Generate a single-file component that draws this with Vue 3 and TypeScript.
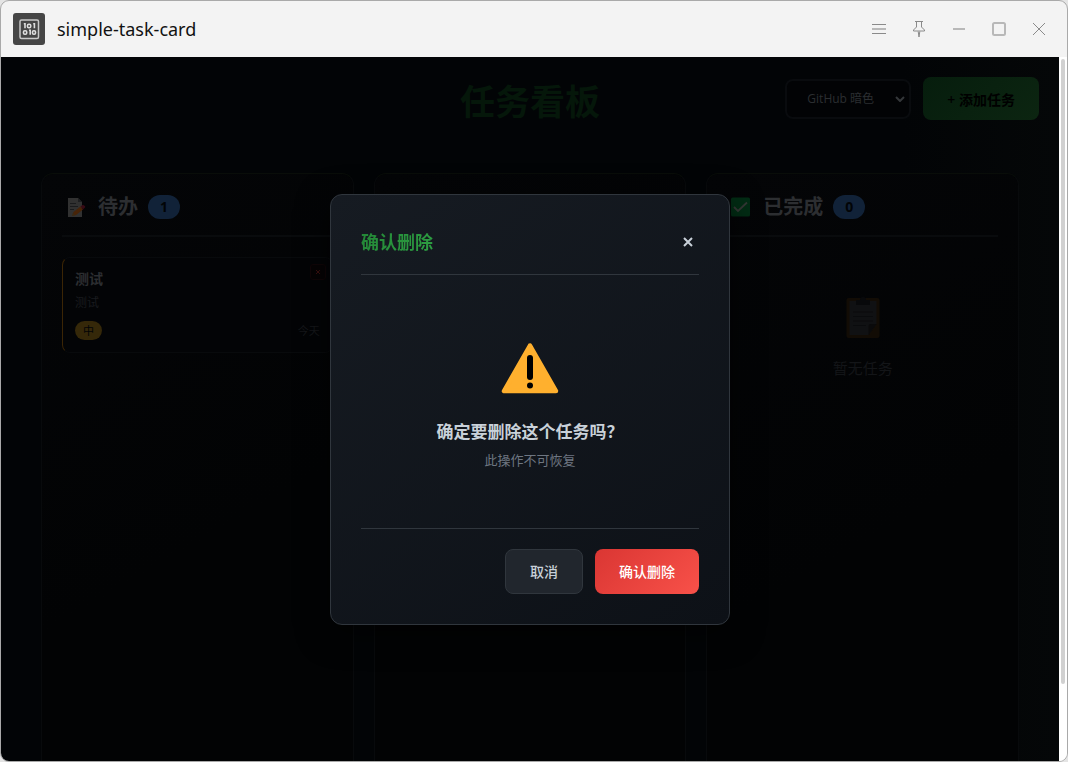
<script setup lang="ts">
import { ref } from 'vue'

interface Task {
  id: number
  title: string
  description: string
  priority: string
  due: string
}

const themes = ['GitHub 暗色']
const theme = ref(themes[0])
const todo = ref<Task[]>([
  { id: 1, title: '测试', description: '测试', priority: '中', due: '今天' },
])
const doneCount = ref(0)
</script>

<template>
  <div class="window">
    <header class="titlebar">
      <svg class="app-icon" viewBox="0 0 32 32" aria-hidden="true">
        <rect width="32" height="32" rx="3" fill="#464646" />
        <rect x="7" y="7" width="18.500" height="18.500" rx="1.500" fill="none" stroke="#c9c9c9" stroke-width="1.500" />
        <g fill="none" stroke="#dedede" stroke-width="1.600">
          <path d="M10.800 10.700h1.200v4.600M20.200 10.700h1.200v4.600M16 17.200h1.200v4.600" />
          <rect x="14.500" y="11.200" width="3.200" height="3.500" rx="1.200" />
          <rect x="10.500" y="17.700" width="3.200" height="3.500" rx="1.200" />
          <rect x="19.500" y="17.700" width="3" height="3.500" rx="1.200" />
        </g>
      </svg>
      <span class="app-name">simple-task-card</span>
      <div class="window-tools">
        <button type="button" aria-label="菜单">
          <svg viewBox="0 0 20 20"><path d="M3 5.500h14M3 14.500h14" /><path class="soft" d="M3 10h14" /></svg>
        </button>
        <button type="button" aria-label="置顶">
          <svg viewBox="0 0 20 20"><path d="M6 2.500h8M7.500 2.500v5.500l-3 3v1h11v-1l-3-3v-5.500M9.200 12.500l.8 5.500.8-5.500" /></svg>
        </button>
        <button type="button" aria-label="最小化">
          <svg viewBox="0 0 20 20"><path class="soft" d="M4 10h12" /></svg>
        </button>
        <button type="button" aria-label="最大化">
          <svg viewBox="0 0 20 20"><rect class="soft" x="4" y="4" width="12" height="12" rx="1.500" /></svg>
        </button>
        <button type="button" aria-label="关闭窗口">
          <svg viewBox="0 0 20 20"><path d="M4 4l12 12M16 4L4 16" /></svg>
        </button>
      </div>
    </header>

    <div class="viewport">
      <main class="page">
        <div class="page-head">
          <h1>任务看板</h1>
          <div class="actions">
            <div class="select-wrap">
              <select v-model="theme" aria-label="主题">
                <option v-for="t in themes" :key="t">{{ t }}</option>
              </select>
              <svg viewBox="0 0 10 6" aria-hidden="true"><path d="M1 1l4 4 4-4" /></svg>
            </div>
            <button class="add" type="button">+ 添加任务</button>
          </div>
        </div>

        <div class="board">
          <section class="column">
            <div class="column-head">
              <svg class="column-icon" viewBox="0 0 20 20" aria-hidden="true">
                <path d="M2 1h10l4 4v15H2z" fill="#313131" />
                <path d="M12 1v4h4z" fill="#1d1e20" />
                <path d="M4 6.500h6M4 9.500h8M4 12.500h4" stroke="#1a1b1d" />
                <path d="M6 19l1.500-4 7-5.500 2.500 3-7 5.500z" fill="#482408" />
                <path d="M14.500 9.500l2-1.500c1-.5 3.500 1.500 2.500 2.500l-2 2z" fill="#370b15" />
                <path d="M6 19l1-3 2 2.200z" fill="#382c18" />
              </svg>
              <h2>待办</h2>
              <span class="count">{{ todo.length }}</span>
            </div>
            <article v-for="task in todo" :key="task.id" class="task">
              <button class="task-delete" type="button" aria-label="删除任务">
                <svg viewBox="0 0 6 6" aria-hidden="true"><path d="M1 1l4 4M5 1L1 5" /></svg>
              </button>
              <h3>{{ task.title }}</h3>
              <p>{{ task.description }}</p>
              <div class="task-foot">
                <span class="priority">{{ task.priority }}</span>
                <time>{{ task.due }}</time>
              </div>
            </article>
          </section>

          <section class="column"></section>

          <section class="column">
            <div class="column-head">
              <svg class="column-icon" viewBox="0 0 20 20" aria-hidden="true">
                <rect y="0.500" width="19" height="19" rx="1.500" fill="#022c14" />
                <path d="M3 10l4 4 9-8.500" fill="none" stroke="#343735" stroke-width="1.800" />
              </svg>
              <h2>已完成</h2>
              <span class="count">{{ doneCount }}</span>
            </div>
            <div class="empty">
              <svg viewBox="0 0 34 44" aria-hidden="true">
                <rect x="0.500" y="2" width="33" height="40" rx="2" fill="#120c05" />
                <path d="M3.500 5h27v23l-8 11h-19z" fill="#101113" />
                <path d="M30.500 28h-6q-2 0-2 2v9z" fill="#0a0a0b" />
                <path d="M10 4h4a3 3 0 0 1 6 0h4v5H10z" fill="#08090b" />
                <path d="M7 16h20M7 20.500h20M7 25h20M7 29.500h13" stroke="#0a0b0d" />
              </svg>
              <p>暂无任务</p>
            </div>
          </section>
        </div>
      </main>

      <div class="scrollbar" aria-hidden="true"><span></span></div>

      <div class="overlay">
        <div class="modal" role="dialog" aria-modal="true" aria-labelledby="dialog-title">
          <div class="modal-head">
            <h2 id="dialog-title">确认删除</h2>
            <button type="button" aria-label="关闭">
              <svg viewBox="0 0 10 10"><path d="M1 1l8 8M9 1L1 9" /></svg>
            </button>
          </div>
          <div class="modal-body">
            <svg viewBox="0 0 58 52" aria-hidden="true">
              <path d="M29 3.500L3 49h52z" fill="#ffb02e" stroke="#ffb02e" stroke-width="4.500" stroke-linejoin="round" />
              <rect x="26" y="13" width="6" height="25" rx="3" fill="#000" />
              <circle cx="29" cy="43.500" r="3" fill="#000" />
            </svg>
            <h3>确定要删除这个任务吗？</h3>
            <p>此操作不可恢复</p>
          </div>
          <div class="modal-foot">
            <button class="cancel" type="button">取消</button>
            <button class="confirm" type="button">确认删除</button>
          </div>
        </div>
      </div>
    </div>
  </div>
</template>

<style>
body {
  margin: 0;
  background: #e4e4e4;
}
</style>

<style scoped>
* {
  box-sizing: border-box;
}

h1, h2, h3, p {
  margin: 0;
}

button, select {
  margin: 0;
  padding: 0;
  border: 0;
  background: none;
  font-family: inherit;
}

.window {
  display: flex;
  flex-direction: column;
  height: 100vh;
  overflow: hidden;
  border: 1px solid #a9a9a9;
  border-radius: 9px;
  background: #f3f3f3;
  font-family: "Open Sans", "Noto Sans CJK SC", sans-serif;
}

.titlebar {
  display: flex;
  align-items: center;
  flex: none;
  height: 56px;
  padding: 0 8px 0 12px;
}

.app-icon {
  width: 32px;
  height: 32px;
  margin-right: 12px;
}

.app-name {
  color: #111;
  font-family: "Noto Sans", sans-serif;
  font-size: 18px;
}

.window-tools {
  display: flex;
  margin-left: auto;
}

.window-tools button {
  display: grid;
  place-items: center;
  width: 40px;
  height: 40px;
}

.window-tools svg {
  width: 20px;
  height: 20px;
  fill: none;
  stroke: #8a8a8a;
}

.window-tools .soft {
  stroke: #b8b8b8;
  stroke-width: 2;
}

.viewport {
  position: relative;
  display: flex;
  flex: 1;
  min-height: 0;
}

.page {
  display: flex;
  flex-direction: column;
  flex: 1;
  padding: 20px 20px 0;
  background: linear-gradient(90deg, #020406 85%, #050708);
}

.page-head {
  display: grid;
  grid-template-columns: 1fr auto 1fr;
  align-items: start;
  margin-bottom: 46px;
}

h1 {
  grid-column: 2;
  color: #05170a;
  font-size: 35px;
  line-height: 50px;
}

.actions {
  display: flex;
  justify-content: flex-end;
  align-items: center;
  gap: 12px;
}

.select-wrap {
  position: relative;
}

select {
  width: 126px;
  height: 40px;
  padding: 0 20px;
  appearance: none;
  border: 2px solid #090b0e;
  border-radius: 8px;
  background: #020305;
  color: #2b2e31;
  font-size: 12px;
}

.select-wrap svg {
  position: absolute;
  top: 17px;
  right: 6px;
  width: 10px;
  height: 6px;
  fill: none;
  stroke: #34373a;
  stroke-width: 2;
  pointer-events: none;
}

.add {
  height: 43px;
  padding: 0 24px;
  border-radius: 8px;
  background: linear-gradient(135deg, #061d0d, #0c2511);
  color: #000;
  font-size: 14px;
  font-weight: 600;
}

.board {
  display: grid;
  grid-template-columns: repeat(3, 1fr);
  flex: 1;
  gap: 20px;
  padding: 0 20px;
}

.column {
  padding: 20px 20px 0;
  border: 1px solid #080a0c;
  border-top-color: #090d09;
  border-bottom: 0;
  border-radius: 12px 12px 0 0;
  background: linear-gradient(150deg, #040507, #020304 60%);
}

.column-head {
  display: flex;
  align-items: center;
  height: 43px;
  padding: 0 4px 16px;
  border-bottom: 2px solid #090b0d;
}

.column-icon {
  width: 20px;
  height: 20px;
  margin-right: 12px;
}

.column-head h2 {
  color: #2c2e31;
  font-size: 20px;
  line-height: 24px;
}

.count {
  width: 32px;
  margin-left: 10px;
  border-radius: 12px;
  background: #112238;
  color: #020406;
  font-size: 14px;
  font-weight: 700;
  line-height: 24px;
  text-align: center;
}

.task {
  position: relative;
  margin-top: 20px;
  padding: 11px 12px 12px;
  border: 1px solid #080a0c;
  border-left-color: #3b2505;
  border-radius: 8px;
  background: #030406;
}

.task-delete {
  position: absolute;
  top: 6px;
  right: 6px;
  display: grid;
  place-items: center;
  width: 16px;
  height: 16px;
  border: 1px solid #100507;
  border-radius: 3px;
  background: #060304;
}

.task-delete svg {
  width: 6px;
  height: 6px;
  stroke: #3b100f;
}

.task h3 {
  color: #2c2e31;
  font-size: 14px;
  line-height: 20px;
}

.task p {
  margin-top: 4px;
  color: #191b1e;
  font-size: 12px;
  line-height: 20px;
}

.task-foot {
  display: flex;
  align-items: center;
  justify-content: space-between;
  margin-top: 8px;
}

.priority {
  padding: 0 8px;
  border-radius: 10px;
  background: #352809;
  color: #020406;
  font-size: 11px;
  line-height: 19px;
}

.task time {
  color: #15171a;
  font-size: 11px;
  line-height: 19px;
}

.empty {
  display: flex;
  flex-direction: column;
  align-items: center;
  padding-top: 59px;
}

.empty svg {
  width: 34px;
  height: 44px;
}

.empty p {
  margin-top: 16px;
  color: #131518;
  font-size: 15px;
  line-height: 24px;
}

.scrollbar {
  flex: none;
  width: 8px;
  padding: 2px 2px 0;
  background: #fff;
}

.scrollbar span {
  display: block;
  height: 89%;
  border-radius: 2px;
  background: #d1d1d1;
}

.overlay {
  position: absolute;
  inset: 0 8px 0 0;
  display: flex;
  align-items: center;
  justify-content: center;
}

.modal {
  width: 400px;
  max-width: 90%;
  padding: 30px;
  border: 1px solid #30363d;
  border-radius: 12px;
  background: linear-gradient(145deg, #161b22, #0d1117);
  box-shadow: 0 8px 32px rgba(0, 0, 0, 0.6);
}

.modal-head {
  display: flex;
  align-items: center;
  justify-content: space-between;
  height: 50px;
  padding-bottom: 15px;
  border-bottom: 1px solid #30363d;
}

.modal-head h2 {
  background: linear-gradient(135deg, #238636, #2ea043);
  background-clip: text;
  color: transparent;
  font-size: 18px;
  line-height: 30px;
}

.modal-head button {
  display: grid;
  place-items: center;
  width: 22px;
  height: 30px;
}

.modal-head button svg {
  width: 10px;
  height: 10px;
  stroke: #c9d1d9;
  stroke-width: 2;
}

.modal-body {
  display: flex;
  flex-direction: column;
  align-items: center;
  padding: 67px 0 58px;
}

.modal-body svg {
  width: 58px;
  height: 52px;
}

.modal-body h3 {
  margin-top: 26px;
  color: #c9d1d9;
  font-size: 17px;
  line-height: 24px;
}

.modal-body p {
  margin-top: 6px;
  color: #6e7681;
  font-size: 13px;
  line-height: 20px;
}

.modal-foot {
  display: flex;
  justify-content: flex-end;
  gap: 12px;
  padding-top: 20px;
  border-top: 1px solid #30363d;
}

.modal-foot button {
  height: 45px;
  padding: 0 24px;
  border-radius: 8px;
  font-size: 14px;
  font-weight: 500;
}

.modal-foot .cancel {
  border: 1px solid #30363d;
  background: #21262d;
  color: #c9d1d9;
}

.modal-foot .confirm {
  background: linear-gradient(135deg, #da3633, #f85149);
  color: #fff;
}
</style>
